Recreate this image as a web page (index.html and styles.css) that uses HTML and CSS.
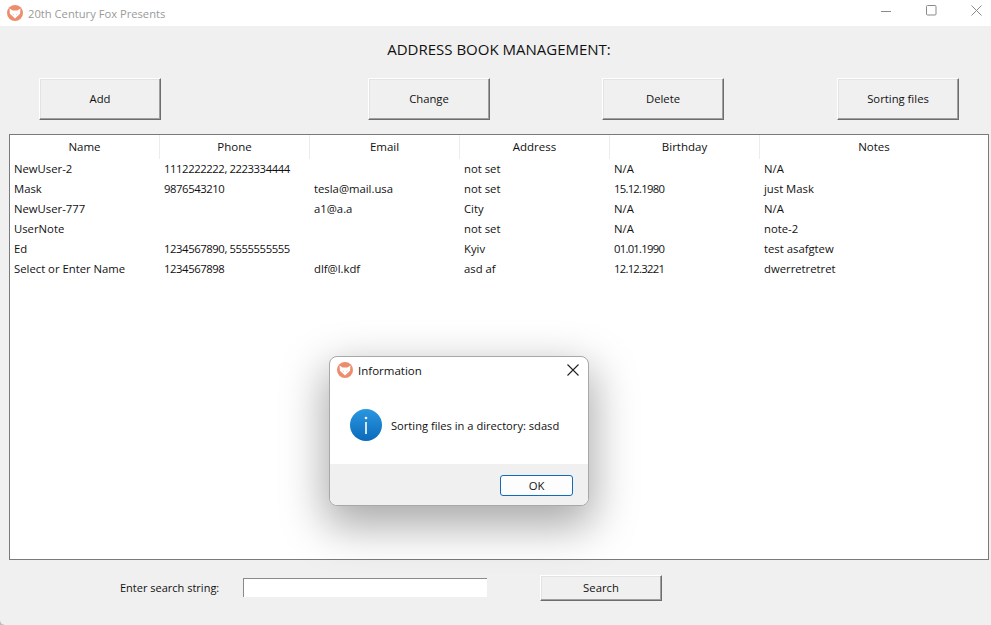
FILE: index.html
```html
<!DOCTYPE html>
<html lang="en">
<head>
    <meta charset="UTF-8">
    <meta name="viewport" content="width=device-width, initial-scale=1.0">
    <title>20th Century Fox Presents</title>
    <link rel="stylesheet" href="styles.css">
</head>
<body>
    <svg class="defs" width="0" height="0">
        <symbol id="fox" viewBox="0 0 16 16">
            <circle cx="8" cy="8" r="8" fill="#ee8d6e"/>
            <path d="M2.600 3.600l3 1.800h4.800l3-1.800-.3 5.200L8 13.600 2.900 8.800z" fill="#fff"/>
            <path d="M5 8.300l2 1-.3 1zM11 8.300l-2 1 .3 1z" fill="#f6c4b2"/>
        </symbol>
    </svg>

    <header class="titlebar">
        <svg class="app-icon"><use href="#fox"/></svg>
        <span class="app-title">20th Century Fox Presents</span>
        <div class="win-controls">
            <svg width="11" height="11" viewBox="0 0 11 11"><path d="M0 6.500h10" stroke="#8a8a8a"/></svg>
            <svg width="11" height="11" viewBox="0 0 11 11"><rect x=".5" y=".5" width="9.500" height="9.500" rx="1" fill="none" stroke="#8a8a8a"/></svg>
            <svg width="11" height="11" viewBox="0 0 11 11"><path d="M.5.5l10 10M10.500.5l-10 10" stroke="#8a8a8a"/></svg>
        </div>
    </header>

    <main class="content">
        <h1>ADDRESS BOOK MANAGEMENT:</h1>
        <div class="toolbar">
            <button class="btn btn-add">Add</button>
            <button class="btn btn-change">Change</button>
            <button class="btn btn-delete">Delete</button>
            <button class="btn btn-sort">Sorting files</button>
        </div>

        <div class="table-box">
            <div class="row head">
                <div>Name</div><div>Phone</div><div>Email</div><div>Address</div><div>Birthday</div><div>Notes</div>
            </div>
            <div class="row">
                <div>NewUser-2</div><div class="num">1112222222, 2223334444</div><div></div><div>not set</div><div>N/A</div><div>N/A</div>
            </div>
            <div class="row">
                <div>Mask</div><div class="num">9876543210</div><div>tesla@mail.usa</div><div>not set</div><div class="date">15.12.1980</div><div>just Mask</div>
            </div>
            <div class="row">
                <div>NewUser-777</div><div></div><div>a1@a.a</div><div>City</div><div>N/A</div><div>N/A</div>
            </div>
            <div class="row">
                <div>UserNote</div><div></div><div></div><div>not set</div><div>N/A</div><div>note-2</div>
            </div>
            <div class="row">
                <div>Ed</div><div class="num">1234567890, 5555555555</div><div></div><div>Kyiv</div><div class="date">01.01.1990</div><div>test asafgtew</div>
            </div>
            <div class="row">
                <div>Select or Enter Name</div><div class="num">1234567898</div><div>dlf@l.kdf</div><div>asd af</div><div class="date">12.12.3221</div><div>dwerretretret</div>
            </div>
        </div>

        <div class="search">
            <label for="q">Enter search string:</label>
            <input id="q" type="text">
            <button class="btn btn-search">Search</button>
        </div>
    </main>

    <div class="dialog">
        <div class="dialog-title">
            <svg class="app-icon"><use href="#fox"/></svg>
            <span>Information</span>
            <svg class="dialog-close" width="12" height="12" viewBox="0 0 12 12"><path d="M.5.5l11 11M11.500.5l-11 11" stroke="#222" stroke-width="1.1"/></svg>
        </div>
        <div class="dialog-body">
            <svg width="32" height="32" viewBox="0 0 32 32">
                <defs>
                    <linearGradient id="info" x1="0" y1="0" x2="0" y2="1">
                        <stop offset="0" stop-color="#2a97e0"/>
                        <stop offset="1" stop-color="#0b6abb"/>
                    </linearGradient>
                </defs>
                <circle cx="16" cy="16" r="16" fill="url(#info)"/>
                <circle cx="16" cy="9" r="1.300" fill="#fff"/>
                <rect x="15.200" y="13" width="1.600" height="12" fill="#fff"/>
            </svg>
            <span class="dialog-msg">Sorting files in a directory: sdasd</span>
        </div>
        <div class="dialog-foot">
            <button class="ok">OK</button>
        </div>
    </div>
</body>
</html>
```

FILE: styles.css
```css
html, body { margin: 0; height: 100%; }
html { background: #bdbdbd; }
body { width: 991px; height: 625px; overflow: hidden; position: relative; font-family: "Open Sans", "Noto Sans", sans-serif; font-size: 11.3px; color: #111; background: #f0f0f0; border-bottom-left-radius: 5px; }
.defs { position: absolute; }

.titlebar { height: 26px; background: #fff; display: flex; align-items: center; padding-left: 7px; }
.app-icon { width: 16px; height: 16px; flex: none; }
.app-title { margin-left: 5px; font-size: 11.2px; color: #9a9a9a; }
.win-controls { margin-left: auto; display: flex; gap: 34px; padding-right: 9px; margin-top: -6px; }

.content { padding: 0 2px 0 9px; }
h1 { margin: 0; padding-top: 13px; box-sizing: border-box; height: 52px; font-size: 15px; font-weight: 400; text-align: center; line-height: 20px; color: #111; }

.btn { box-sizing: border-box; width: 122px; font: inherit; font-size: 11.3px; color: #111; background: #f0f0f0; border: 1px solid; border-color: #fff #6d6d6d #6d6d6d #fff; box-shadow: inset -1px -1px 0 #a0a0a0, inset 1px 1px 0 #e3e3e3; padding: 0 0 2px; }
.toolbar { display: flex; height: 42px; margin-bottom: 14px; }
.toolbar .btn { height: 42px; }
.btn-add { margin-left: 30px; }
.btn-change { margin-left: 207px; }
.btn-delete { margin-left: 112px; }
.btn-sort { margin-left: 113px; }

.table-box { box-sizing: border-box; width: 980px; height: 426px; background: #fff; border: 1px solid #7a7a7a; }
.row { display: grid; grid-template-columns: 150px 150px 150px 150px 150px 1fr; height: 20px; line-height: 20px; }
.row > div { padding-left: 4px; white-space: nowrap; }
.row > .num { letter-spacing: -.42px; }
.row > .date { letter-spacing: -.75px; }
.head { height: 24px; line-height: 23px; font-size: 11.5px; }
.head > div { padding-left: 0; text-align: center; border-right: 1px solid #ececec; box-sizing: border-box; }
.head > div:last-child { border-right: 0; }

.search { display: flex; align-items: center; height: 26px; margin-top: 15px; }
.search label { margin-left: 111px; width: 123px; font-size: 11px; padding-bottom: 2px; }
.search input { box-sizing: border-box; width: 244px; height: 19px; margin-bottom: 2px; border: 0; border-top: 1px solid #8a8a8a; border-left: 1px solid #8a8a8a; background: #fff; padding: 0; }
.btn-search { height: 26px; margin-left: 53px; }

.dialog { position: absolute; left: 329px; top: 356px; width: 260px; height: 150px; box-sizing: border-box; display: flex; flex-direction: column; background: #fff; border: 1px solid #a8a8a8; border-radius: 8px; overflow: hidden; box-shadow: 0 16px 44px 4px rgba(0,0,0,.34); }
.dialog-title { display: flex; align-items: center; height: 26px; padding: 0 9px 0 7px; font-size: 11.5px; color: #111; flex: none; }
.dialog-title span { margin-left: 5px; }
.dialog-close { margin-left: auto; }
.dialog-body { flex: 1; display: flex; align-items: center; gap: 9px; padding: 2px 0 0 20px; font-size: 11.15px; }
.dialog-msg { padding-top: 2px; }
.dialog-foot { flex: none; height: 41px; background: #f0f0f0; display: flex; align-items: center; justify-content: flex-end; padding: 1px 15px 0 0; box-sizing: border-box; }
.ok { box-sizing: border-box; width: 73px; height: 21px; padding: 0; font: inherit; font-size: 11.3px; color: #111; background: #fdfdfd; border: 1px solid #0f6cbd; border-radius: 3px; }
```
